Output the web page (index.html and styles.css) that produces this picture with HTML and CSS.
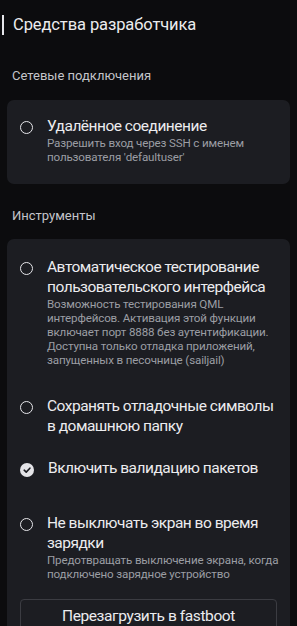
FILE: index.html
```html
<!DOCTYPE html>
<html lang="ru">
<head>
    <meta charset="UTF-8">
    <meta name="viewport" content="width=device-width, initial-scale=1.0">
    <title>Средства разработчика</title>
    <link rel="stylesheet" href="styles.css">
</head>
<body>
    <div class="header">
        <span class="header-bar"></span>
        <h1>Средства разработчика</h1>
    </div>

    <div class="section-label section-net">Сетевые подключения</div>
    <div class="card card-net">
        <div class="option">
            <span class="radio"></span>
            <div class="option-text">
                <div class="option-title">Удалённое соединение</div>
                <div class="option-desc">Разрешить вход через SSH с именем пользователя 'defaultuser'</div>
            </div>
        </div>
    </div>

    <div class="section-label section-tools">Инструменты</div>
    <div class="card card-tools">
        <div class="option opt-ui">
            <span class="radio"></span>
            <div class="option-text">
                <div class="option-title">Автоматическое тестирование пользовательского интерфейса</div>
                <div class="option-desc">Возможность тестирования QML интерфейсов. Активация этой функции включает порт 8888 без аутентификации. Доступна только отладка приложений, запущенных в песочнице (sailjail)</div>
            </div>
        </div>
        <div class="option opt-symbols">
            <span class="radio"></span>
            <div class="option-text">
                <div class="option-title">Сохранять отладочные символы в домашнюю папку</div>
            </div>
        </div>
        <div class="option opt-validate">
            <span class="radio checked">
                <svg viewBox="0 0 14 14" width="14" height="14">
                    <circle cx="7" cy="7" r="7" fill="#e4e4e8"/>
                    <path d="M4.2 7.2 L6.2 9.1 L9.9 5.2" fill="none" stroke="#1c1d22" stroke-width="1.6" stroke-linecap="round" stroke-linejoin="round"/>
                </svg>
            </span>
            <div class="option-text">
                <div class="option-title">Включить валидацию пакетов</div>
            </div>
        </div>
        <div class="option opt-screen">
            <span class="radio"></span>
            <div class="option-text">
                <div class="option-title">Не выключать экран во время зарядки</div>
                <div class="option-desc">Предотвращать выключение экрана, когда подключено зарядное устройство</div>
            </div>
        </div>
        <button class="btn">Перезагрузить в fastboot</button>
    </div>
</body>
</html>
```

FILE: styles.css
```css
body {
    margin: 0;
    background: #0c0c0e;
    font-family: Roboto, 'Noto Sans', sans-serif;
    color: #e6e6ea;
    height: 626px;
    overflow: hidden;
}
.header {
    display: flex;
    align-items: center;
    padding: 15px 0 0 2px;
}
.header-bar {
    width: 2px;
    height: 20px;
    background: #e6e6ea;
}
.header h1 {
    margin: 0 0 0 9px;
    font-size: 16.5px;
    font-weight: 400;
    line-height: 20px;
    letter-spacing: -0.1px;
    color: #ececef;
}
.section-label {
    padding-left: 12px;
    font-size: 13px;
    line-height: 16px;
    color: #c4c5ca;
}
.section-net {
    margin-top: 33px;
}
.section-tools {
    margin-top: 24px;
}
.card {
    margin: 0 7px;
    background: #1c1d22;
    border-radius: 7px;
}
.card-net {
    margin-top: 16px;
    padding: 16px 0 20px;
}
.card-tools {
    margin-top: 15px;
    padding: 18px 0 20px;
}
.option {
    display: flex;
    padding: 0 6px 0 13px;
}
.radio {
    flex: none;
    width: 13px;
    height: 13px;
    box-sizing: border-box;
    border: 1.5px solid #e6e6ea;
    border-radius: 50%;
    margin-top: 5px;
}
.radio.checked {
    width: 14px;
    height: 14px;
    border: none;
}
.radio svg {
    display: block;
}
.option-text {
    margin-left: 14px;
}
.option-title {
    font-size: 15.5px;
    line-height: 20px;
    letter-spacing: -0.5px;
    color: #ececef;
}
.option-desc {
    font-size: 11.6px;
    line-height: 14px;
    letter-spacing: -0.15px;
    color: #9b9da4;
}
.opt-symbols {
    margin-top: 29px;
}
.opt-validate {
    margin-top: 22px;
}
.opt-screen {
    margin-top: 35px;
}
.btn {
    display: block;
    width: calc(100% - 26px);
    margin: 18px 13px 0;
    padding: 6px 0 14px;
    background: transparent;
    border: 1px solid #3b3c42;
    border-radius: 4px;
    font-family: inherit;
    font-size: 15.5px;
    line-height: 20px;
    letter-spacing: -0.4px;
    color: #ececef;
}
```
